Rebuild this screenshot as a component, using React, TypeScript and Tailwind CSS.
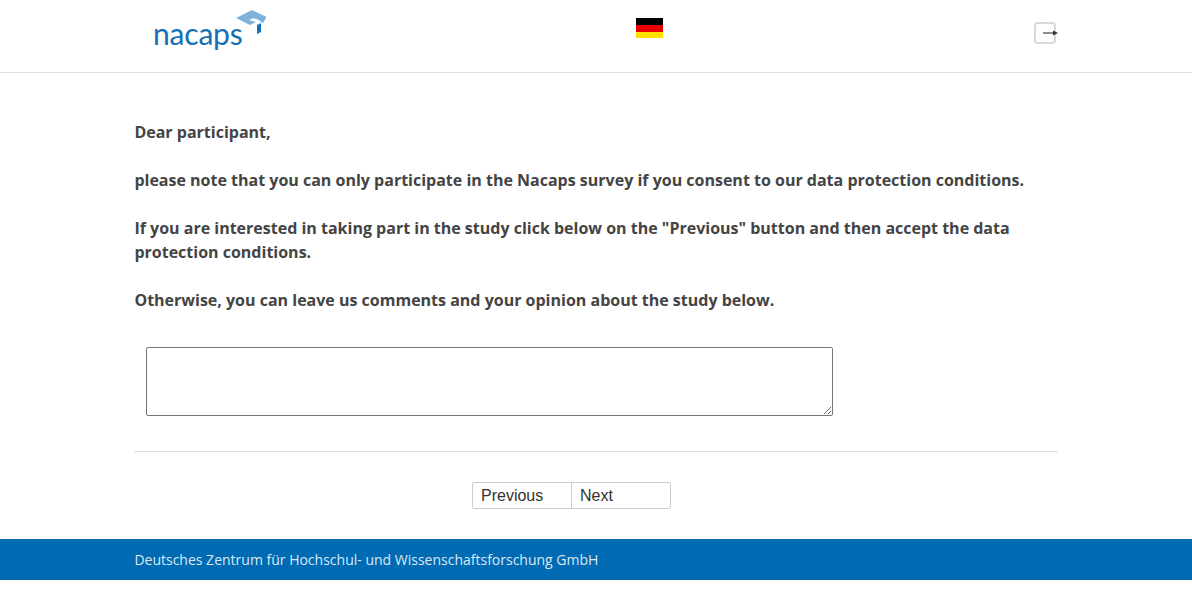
export default function App() {
  return (
    <div className="min-h-[589px] bg-white font-['Open_Sans',sans-serif] text-[#444444]">
      <header className="h-[73px] border-b border-[#dedede]">
        <div className="relative mx-auto flex h-[72px] w-[924px] items-start justify-between">
          <div className="relative ml-[19px] mt-[10px] h-[40px] w-[114px]">
            <span className="absolute left-0 top-[5px] font-['Lato',sans-serif] text-[30px] leading-[36px] tracking-[-0.2px] text-[#1570b5]">nacaps</span>
            <svg className="absolute left-[81px] top-0" width="33" height="26" viewBox="0 0 33 26">
              <path d="M2 8 L18 0 L32.5 7 L29 13 L27 12 L25 10 L19 8 L15 10 L22 12 L16 15 Z" fill="#7fb1d9" />
              <path d="M23 15 L27 13 L27 22 L23 24 Z" fill="#1570b5" />
            </svg>
          </div>
          <div className="mt-[18px] ml-[369px] flex h-[20px] w-[27px] flex-col">
            <div className="h-[7px] bg-black" />
            <div className="h-[7px] bg-[#e80000]" />
            <div className="h-[6px] bg-[#ffdf00]" />
          </div>
          <div className="flex-1" />
          <div className="relative mt-[22px] h-[22px] w-[24px]">
            <div className="h-[22px] w-[22px] rounded-[4px] border-2 border-[#d9d9d9] bg-white" />
            <svg className="absolute left-[9px] top-[7px]" width="15" height="8" viewBox="0 0 15 8">
              <path d="M0 4 H11" stroke="#444" strokeWidth="1.2" />
              <path d="M10 1.5 L15 4 L10 6.5 Z" fill="#333" />
            </svg>
          </div>
        </div>
      </header>

      <main className="mx-auto w-[924px] pt-[47px]">
        <div className="pl-[0.4px] text-[16px] font-bold leading-[24px]">
          <p className="mb-[24px]">Dear participant,</p>
          <p className="mb-[24px]">please note that you can only participate in the Nacaps survey if you consent to our data protection conditions.</p>
          <p className="mb-[24px]">If you are interested in taking part in the study click below on the "Previous" button and then accept the data protection conditions.</p>
          <p>Otherwise, you can leave us comments and your opinion about the study below.</p>
        </div>
        <div className="pl-[12px] pt-[35px]">
          <textarea className="block h-[69px] w-[687px] rounded-[2px] border border-[#767676] bg-white" />
        </div>
        <div className="mt-[35px] border-t border-[#dedede]" />
        <div className="flex justify-center pt-[30px] pr-[49px] font-['Liberation_Sans',sans-serif] text-[16px] leading-[25px] text-[#333]">
          <div className="flex h-[27px] w-[199px] rounded-[2px] border border-[#ccc]">
            <button className="h-full w-[99px] border-r border-[#ccc] pl-[8px] text-left">Previous</button>
            <button className="h-full flex-1 pl-[8px] text-left">Next</button>
          </div>
        </div>
      </main>

      <footer className="mt-[30px] h-[41px] bg-[#006ab3]">
        <div className="mx-auto w-[924px] pl-[0.4px] text-[14px] leading-[41px] text-[#dbe9f4]">
          Deutsches Zentrum für Hochschul- und Wissenschaftsforschung GmbH
        </div>
      </footer>
    </div>
  );
}
